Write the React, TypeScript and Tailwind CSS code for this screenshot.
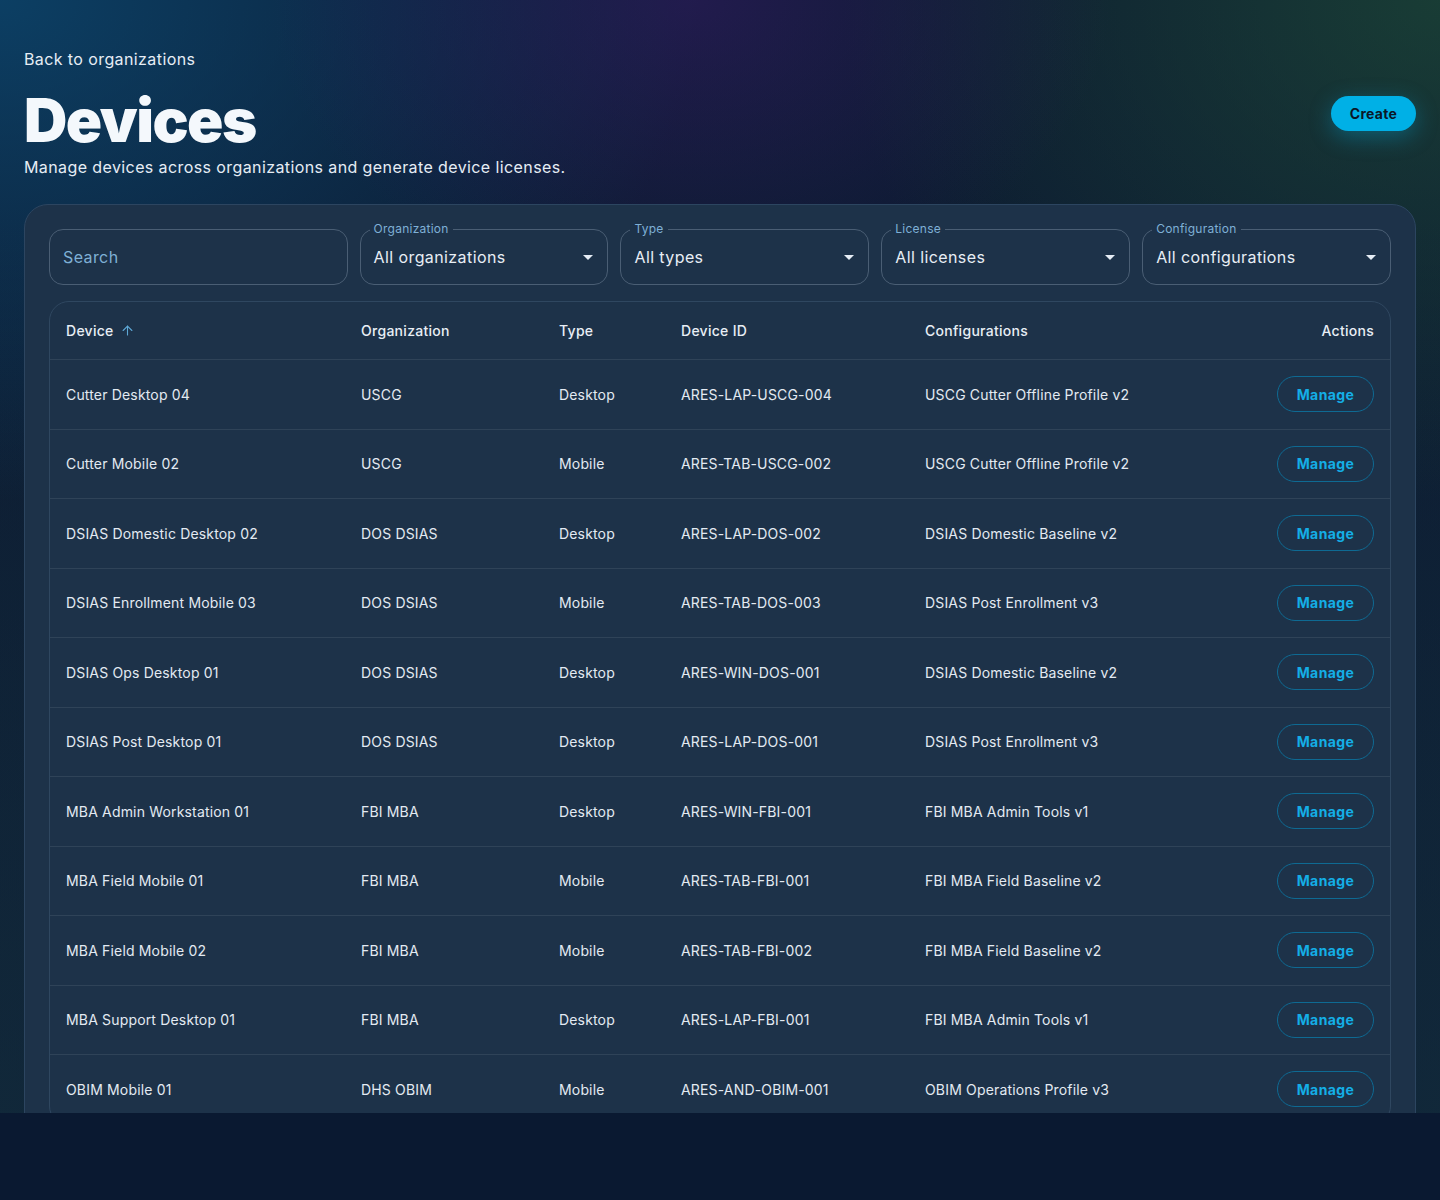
import React from "react";
import { ArrowUp } from "lucide-react";

const rows = [
  ["Cutter Desktop 04", "USCG", "Desktop", "ARES-LAP-USCG-004", "USCG Cutter Offline Profile v2"],
  ["Cutter Mobile 02", "USCG", "Mobile", "ARES-TAB-USCG-002", "USCG Cutter Offline Profile v2"],
  ["DSIAS Domestic Desktop 02", "DOS DSIAS", "Desktop", "ARES-LAP-DOS-002", "DSIAS Domestic Baseline v2"],
  ["DSIAS Enrollment Mobile 03", "DOS DSIAS", "Mobile", "ARES-TAB-DOS-003", "DSIAS Post Enrollment v3"],
  ["DSIAS Ops Desktop 01", "DOS DSIAS", "Desktop", "ARES-WIN-DOS-001", "DSIAS Domestic Baseline v2"],
  ["DSIAS Post Desktop 01", "DOS DSIAS", "Desktop", "ARES-LAP-DOS-001", "DSIAS Post Enrollment v3"],
  ["MBA Admin Workstation 01", "FBI MBA", "Desktop", "ARES-WIN-FBI-001", "FBI MBA Admin Tools v1"],
  ["MBA Field Mobile 01", "FBI MBA", "Mobile", "ARES-TAB-FBI-001", "FBI MBA Field Baseline v2"],
  ["MBA Field Mobile 02", "FBI MBA", "Mobile", "ARES-TAB-FBI-002", "FBI MBA Field Baseline v2"],
  ["MBA Support Desktop 01", "FBI MBA", "Desktop", "ARES-LAP-FBI-001", "FBI MBA Admin Tools v1"],
  ["OBIM Mobile 01", "DHS OBIM", "Mobile", "ARES-AND-OBIM-001", "OBIM Operations Profile v3"],
];

function Caret() {
  return (
    <svg width="24" height="24" viewBox="0 0 24 24" className="shrink-0 text-[#e6edf5]">
      <path d="M7 10l5 5 5-5z" fill="currentColor" />
    </svg>
  );
}

function SelectField({ label, value }: { label: string; value: string }) {
  return (
    <div className="relative h-14 rounded-[14px] border border-[#4a5e74] flex items-center justify-between pl-[13px] pr-[7px]">
      <span className="absolute -top-[9px] left-[9px] bg-[#1d3249] px-[4px] text-[12px] leading-4 tracking-[0.02em] text-[#7fb0d6]">
        {label}
      </span>
      <span className="text-[16px] tracking-[0.025em] text-[#e8eef5]">{value}</span>
      <Caret />
    </div>
  );
}

export default function App() {
  return (
    <div className="min-h-[1200px] bg-[#0a1931] [font-family:Inter,'Noto_Sans',sans-serif]">
      <div className="h-[1113px] overflow-hidden bg-[radial-gradient(ellipse_420px_300px_at_48%_0%,rgba(55,28,105,0.5),transparent_100%),radial-gradient(ellipse_700px_500px_at_0%_0%,rgba(12,72,112,0.8),transparent_100%),radial-gradient(ellipse_600px_500px_at_100%_0%,rgba(30,75,55,0.7),transparent_100%),radial-gradient(ellipse_500px_900px_at_0%_100%,rgba(18,45,60,0.6),transparent_100%),radial-gradient(ellipse_500px_900px_at_100%_100%,rgba(18,45,60,0.6),transparent_100%),linear-gradient(#0c1a31,#0f2036)]">
        <div className="px-6 pt-[47px]">
          <div className="flex items-center justify-between">
            <div>
              <div className="text-[16px] leading-6 tracking-[0.025em] text-[#e6edf5]">Back to organizations</div>
              <h1 className="mt-[19px] text-[60px] leading-[60px] font-black tracking-[-0.025em] text-[#f4f8fc]">
                Devices
              </h1>
              <p className="mt-[5px] text-[16px] leading-6 tracking-[0.025em] text-[#e6edf5]">
                Manage devices across organizations and generate device licenses.
              </p>
            </div>
            <button className="h-[35px] w-[85px] rounded-full bg-[#00b0e6] text-[14px] font-bold tracking-[0.02em] text-[#0b1626] shadow-[0_6px_22px_rgba(0,176,230,0.35)]">
              Create
            </button>
          </div>

          <div className="mt-[25px] rounded-[24px] border border-[#2c4560] bg-[#1d3249] px-6 pt-6 pb-6">
            <div className="grid grid-cols-[1.2fr_1fr_1fr_1fr_1fr] gap-3">
              <div className="h-14 rounded-[14px] border border-[#4a5e74] flex items-center px-[13px]">
                <span className="text-[16px] tracking-[0.025em] text-[#7fb0d6]">Search</span>
              </div>
              <SelectField label="Organization" value="All organizations" />
              <SelectField label="Type" value="All types" />
              <SelectField label="License" value="All licenses" />
              <SelectField label="Configuration" value="All configurations" />
            </div>

            <div className="mt-4 rounded-[20px] border border-[#2f4760] overflow-hidden">
              <div className="grid grid-cols-[295px_198px_122px_244px_1fr] h-[58px] items-center border-b border-[#2f4358] text-[14px] font-medium tracking-[0.02em] text-[#e8eef5]">
                <div className="px-4 flex items-center gap-[6px]">
                  Device <ArrowUp size={15} strokeWidth={1.75} className="text-[#5ea8d6]" />
                </div>
                <div className="px-4">Organization</div>
                <div className="px-4">Type</div>
                <div className="px-4">Device ID</div>
                <div className="px-4 flex justify-between">
                  <span>Configurations</span>
                  <span>Actions</span>
                </div>
              </div>
              {rows.map((r, i) => (
                <div
                  key={i}
                  className="grid grid-cols-[295px_198px_122px_244px_1fr] h-[69.5px] items-center border-b border-[#2f4358] text-[14px] tracking-[0.012em] text-[#e3eaf2]"
                >
                  <div className="px-4">{r[0]}</div>
                  <div className="px-4">{r[1]}</div>
                  <div className="px-4">{r[2]}</div>
                  <div className="px-4">{r[3]}</div>
                  <div className="px-4 flex items-center justify-between">
                    <span>{r[4]}</span>
                    <button className="h-9 w-[97px] rounded-full border border-[#0e6a93] text-[14px] font-bold tracking-[0.03em] text-[#14aee6]">
                      Manage
                    </button>
                  </div>
                </div>
              ))}
            </div>
          </div>
        </div>
      </div>
    </div>
  );
}
